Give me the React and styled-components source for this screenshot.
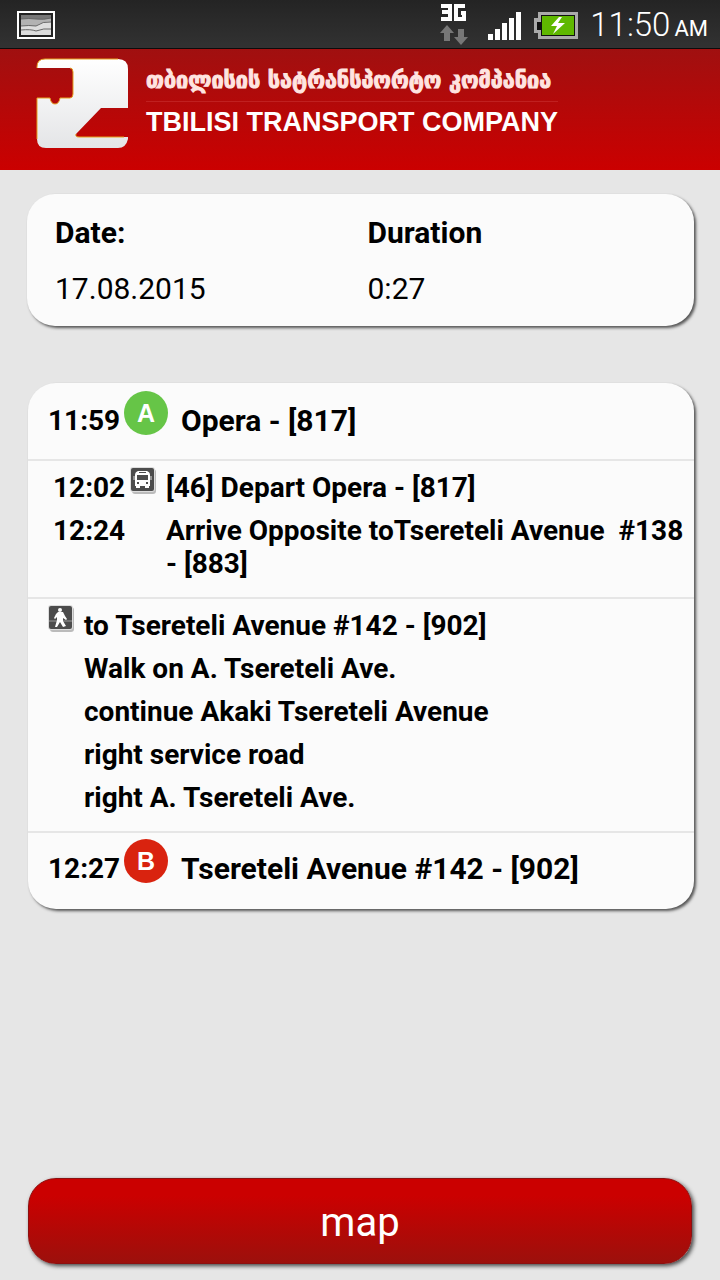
import React from "react";
import styled, { createGlobalStyle } from "styled-components";

const GlobalStyle = createGlobalStyle`
  * {
    box-sizing: border-box;
  }
  body {
    margin: 0;
    background: #e6e6e6;
    color: #000;
    font-family: Roboto, "Noto Sans", sans-serif;
  }
`;

const Page = styled.div`
  min-height: 100vh;
  display: flex;
  flex-direction: column;
`;

const StatusBar = styled.div`
  height: 49px;
  padding: 2px 12px 0 17px;
  display: flex;
  align-items: center;
  justify-content: space-between;
  background: linear-gradient(#242424, #323232);
  border-bottom: 1px solid #0c0c0c;
  color: #fff;
`;

const StatusIcons = styled.div`
  display: flex;
  align-items: center;
`;

const Clock = styled.time`
  margin-left: 12px;
  padding-top: 4px;
  font-size: 33px;
  font-weight: 300;
  line-height: 40px;
`;

const Meridiem = styled.span`
  margin-left: 4px;
  font-size: 22px;
  font-weight: 400;
`;

const Header = styled.header`
  height: 121px;
  padding: 9px 36px 0;
  display: flex;
  align-items: flex-start;
  gap: 18px;
  background: linear-gradient(#a01010, #cb0000);
  color: #fff;
`;

const Titles = styled.div`
  padding-top: 6px;
`;

const GeorgianTitle = styled.div`
  padding-bottom: 5px;
  border-bottom: 1px solid #c02020;
  color: #ffe4e0;
  font: bold 24px/32px "DejaVu Sans Condensed", "DejaVu Sans", sans-serif;
  -webkit-text-stroke: 1px #ffe4e0;
  white-space: nowrap;
`;

const EnglishTitle = styled.h1`
  margin: 4px 0 0;
  font: bold 27px/32px "Liberation Sans", sans-serif;
  white-space: nowrap;
`;

const Main = styled.main`
  flex: 1;
  padding: 24px 26px 16px 27px;
  display: flex;
  flex-direction: column;
`;

const Card = styled.section`
  border-radius: 28px;
  background: #fbfbfb;
  box-shadow: 2px 2px 3px #555;
`;

const Summary = styled(Card).attrs({ as: "dl" })`
  margin: 0 0 57px;
  padding: 22px 28px 20px;
  display: grid;
  grid-template-columns: 1fr 1fr;
  column-gap: 14px;
  font-size: 30px;
  line-height: 34px;

  dt {
    font-weight: bold;
  }

  dd {
    margin: 22px 0 0;
  }
`;

const Route = styled(Card)`
  margin-left: 1px;
  font-size: 28px;
  line-height: 33px;
  font-weight: bold;
`;

const Leg = styled.div`
  border-top: ${({ $first }) => ($first ? "none" : "2px solid #e6e6e6")};
`;

const Stop = styled(Leg)`
  padding: ${({ $first }) => ($first ? "8px 20px 22px" : "6px 20px 24px")};
  display: flex;
  align-items: flex-end;
  font-size: 30px;
`;

const StopTime = styled.time`
  width: 76px;
  flex: none;
  font-size: 28px;
`;

const Marker = styled.span`
  width: 44px;
  height: 44px;
  margin: 0 13px 2px 0;
  display: flex;
  align-items: center;
  justify-content: center;
  border-radius: 50%;
  background: ${({ $color }) => $color};
  color: #fff;
  font: bold 25px/44px "Liberation Sans", sans-serif;
`;

const Ride = styled(Leg)`
  padding: 10px 10px 17px 25px;
  display: grid;
  grid-template-columns: 77px 36px 1fr;
  row-gap: 10px;
  white-space: pre-wrap;
`;

const Walk = styled(Leg)`
  padding: 10px 10px 17px 20px;
  display: flex;
  gap: 10px;
`;

const Directions = styled.ul`
  margin: 0;
  padding: 0;
  display: grid;
  row-gap: 10px;
  list-style: none;
`;

const Glyph = styled.svg`
  width: 26px;
  height: 27px;
  flex: none;
  margin-top: -4px;
`;

const MapButton = styled.button`
  height: 86px;
  margin: auto 2px 0 1px;
  padding: 4px 24px 0;
  border: 1px solid #8c1010;
  border-radius: 28px;
  background: linear-gradient(#cb0000 20%, #9c100c);
  box-shadow: 2px 2px 4px #444;
  color: #fff;
  font: 40px/48px Roboto, sans-serif;
  cursor: pointer;
`;

const PictureIcon = () => (
  <svg width="38" height="28" viewBox="0 0 38 28" aria-hidden="true">
    <rect width="38" height="28" fill="#fff" />
    <rect x="2" y="2" width="34" height="24" fill="#222" />
    <rect x="4" y="4" width="30" height="20" fill="#b2b2b2" />
    <path d="M4 4h30v3q-8 2-15 1T4 8z" fill="#777" />
    <path d="M4 15q8-1 15 0 7-5 15-4v13H4z" fill="#ddd" />
    <path
      d="M4 8q8-1 15 0 8 1 15-1M4 15q8-1 15 0 7-5 15-4M4 19q10-1 15 1 8-3 15-2"
      fill="none"
      stroke="#666"
    />
  </svg>
);

const NetworkIcon = () => (
  <svg width="28" height="42" viewBox="0 0 28 42" role="img" aria-label="3G">
    <path
      d="M1 2h9v13H1M2 8h8M25 2h-9v13h8V9h-3"
      fill="none"
      stroke="#fff"
      strokeWidth="4"
    />
    <path d="M7 21l7 8h-4v8H4v-8H0zM21 41l-7-8h4v-8h6v8h4z" fill="#777" />
  </svg>
);

const SignalIcon = styled.svg`
  margin: 2px 12px 0 20px;
`;

const Signal = () => (
  <SignalIcon width="34" height="28" viewBox="0 0 34 28" aria-hidden="true">
    <path
      d="M0 22h5v6H0zM7 17h5v11H7zM14 11h5v17h-5zM21 6h5v22h-5zM28 0h5v28h-5z"
      fill="#fff"
    />
  </SignalIcon>
);

const BatteryIcon = () => (
  <svg width="44" height="27" viewBox="0 0 44 27" aria-hidden="true">
    <path d="M4 0h40v27H4v-6H0V6h4z" fill="#aaa" />
    <path d="M7 3h34v21H7v-6H3v-8h4z" fill="#111" />
    <path d="M8 4h32v19H8z" fill="#5fb800" />
    <path d="M25 5l-8 9h6l-4 8 12-11h-7l4-6z" fill="#fff" />
  </svg>
);

const Logo = () => (
  <svg width="92" height="91" viewBox="0 0 92 91" aria-hidden="true">
    <defs>
      <linearGradient id="logo" x1="0" y1="0" x2="0" y2="1">
        <stop offset="0" stopColor="#fff" />
        <stop offset="1" stopColor="#e4e5e7" />
      </linearGradient>
    </defs>
    <path
      d="M1 10V9Q1 1 9 1H82Q92 1 92 11V50H65L40 76Q39 79 43 79H92V81Q90 90 82 90H10Q1 90 1 81V40H14Q15 46 19 46T24 40H34Q37 40 37 36V14Q37 10 34 10Z"
      fill="url(#logo)"
    />
    <path
      d="M1 10V9Q1 1 9 1H82M1 40H14Q15 46 19 46T24 40H34Q37 40 37 36V14Q37 10 34 10M1 81V40M40 76Q39 79 43 79H88"
      fill="none"
      stroke="#e5a020"
      strokeWidth="1"
    />
  </svg>
);

const GlyphPlate = () => (
  <>
    <rect x="2" y="2" width="24" height="25" rx="3" fill="#bbb" />
    <rect x="0" y="0" width="25" height="25" rx="3" fill="#ddd" />
    <rect x="1" y="1" width="23" height="23" rx="2" fill="#4c4c4c" />
  </>
);

const BusIcon = () => (
  <Glyph viewBox="0 0 26 27" role="img" aria-label="Bus">
    <GlyphPlate />
    <path
      d="M8 4h9q3 1 3 4v11h-1v2h-4v-2h-5v2H6v-2H5V8q0-3 3-4z"
      fill="#fff"
    />
    <path d="M4 9v4M21 9v4" stroke="#ddd" />
    <path
      d="M9 5h7v1H9zM7 8h11v5H7zM7 15h2v2H7zM16 15h2v2h-2z"
      fill="#4c4c4c"
    />
  </Glyph>
);

const WalkIcon = () => (
  <Glyph viewBox="0 0 26 27" role="img" aria-label="Walk">
    <GlyphPlate />
    <path d="M1 16h23" stroke="#999" />
    <circle cx="12" cy="5" r="2" fill="#fff" />
    <path
      d="M10 7h5l2 4 2 3-1 1-3-2v3l3 5-3 1-3-5-3 5H7l2-7v-3l-2 2-1-1 2-4z"
      fill="#fff"
    />
  </Glyph>
);

const directions = [
  "to Tsereteli Avenue #142 - [902]",
  "Walk on A. Tsereteli Ave.",
  "continue Akaki Tsereteli Avenue",
  "right service road",
  "right A. Tsereteli Ave.",
];

const App = () => (
  <Page>
    <GlobalStyle />
    <StatusBar>
      <PictureIcon />
      <StatusIcons>
        <NetworkIcon />
        <Signal />
        <BatteryIcon />
        <Clock>
          11:50<Meridiem>AM</Meridiem>
        </Clock>
      </StatusIcons>
    </StatusBar>

    <Header>
      <Logo />
      <Titles>
        <GeorgianTitle lang="ka">თბილისის სატრანსპორტო კომპანია</GeorgianTitle>
        <EnglishTitle>TBILISI TRANSPORT COMPANY</EnglishTitle>
      </Titles>
    </Header>

    <Main>
      <Summary>
        <dt>Date:</dt>
        <dt>Duration</dt>
        <dd>17.08.2015</dd>
        <dd>0:27</dd>
      </Summary>

      <Route>
        <Stop $first>
          <StopTime>11:59</StopTime>
          <Marker $color="#66c547">A</Marker>
          <span>Opera - [817]</span>
        </Stop>
        <Ride>
          <time>12:02</time>
          <BusIcon />
          <span>[46] Depart Opera - [817]</span>
          <time>12:24</time>
          <span />
          <span>{"Arrive Opposite toTsereteli Avenue  #138 - [883]"}</span>
        </Ride>
        <Walk>
          <WalkIcon />
          <Directions>
            {directions.map((step) => (
              <li key={step}>{step}</li>
            ))}
          </Directions>
        </Walk>
        <Stop>
          <StopTime>12:27</StopTime>
          <Marker $color="#d9230f">B</Marker>
          <span>Tsereteli Avenue #142 - [902]</span>
        </Stop>
      </Route>

      <MapButton type="button">map</MapButton>
    </Main>
  </Page>
);

export default App;
